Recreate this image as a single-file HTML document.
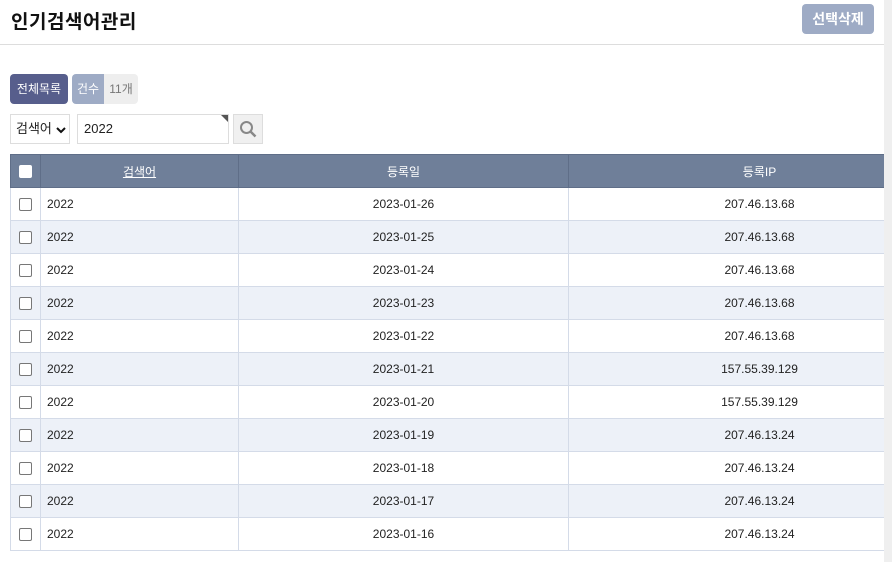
<!DOCTYPE html>
<html><head><meta charset="utf-8"><style>
*{box-sizing:border-box;margin:0;padding:0}
body{width:892px;height:562px;background:#fff;font-family:"Liberation Sans","Noto Sans CJK KR",sans-serif;position:relative;overflow:hidden;color:#222}
.sb{position:absolute;left:884px;top:0;width:8px;height:562px;background:#efefef;z-index:5}
h1{position:absolute;left:11px;top:7px;font-size:19px;font-weight:bold;color:#111;letter-spacing:0.5px}
.hr{position:absolute;left:0;top:44px;width:884px;height:1px;background:#ddd}
.del{position:absolute;left:802px;top:4px;width:72px;height:30px;background:#9eabc5;border-radius:4px;color:#fff;font-size:14px;font-weight:bold;text-align:center;line-height:30px}
.all{position:absolute;left:10px;top:74px;width:58px;height:30px;background:#575e8c;border-radius:4px;color:#fff;font-size:12px;text-align:center;line-height:30px}
.cnt{position:absolute;left:72px;top:74px;width:66px;height:30px;border-radius:4px;overflow:hidden;font-size:12px;line-height:30px;display:flex}
.cnt span:first-child{width:32px;background:#9eabc5;color:#fff;text-align:center}
.cnt span:last-child{flex:1;background:#eee;color:#777;text-align:center}
.sel{position:absolute;left:10px;top:114px;width:60px;height:30px;border:1px solid #ddd;font-size:13px;line-height:28px;padding-left:5px}
.inp{position:absolute;left:77px;top:114px;width:152px;height:30px;border:1px solid #ddd;font-size:13px;line-height:28px;padding-left:6px}
.inp:after{content:"";position:absolute;right:0;top:0;border-top:7px solid #555;border-left:7px solid transparent}
.btn{position:absolute;left:233px;top:114px;width:30px;height:30px;border:1px solid #ddd;background:#f0f0f0}
table{position:absolute;left:10px;top:154px;width:940px;border-collapse:collapse;font-size:12px;table-layout:fixed}
th{background:#6f7f99;color:#fff;font-weight:normal;height:33px;border:1px solid #5f6e88}
td{height:33px;border:1px solid #d4dbe8;text-align:center}
tr:nth-child(odd) td{background:#edf1f8}
td.k{text-align:left;padding-left:6px}
.cb{display:inline-block;width:13px;height:13px;border:1px solid #777;border-radius:2px;background:#fff;vertical-align:middle}
th .cb{border-color:#fff}
</style></head><body>
<div class="sb"></div>
<h1>인기검색어관리</h1>
<div class="del">선택삭제</div>
<div class="hr"></div>
<div class="all">전체목록</div>
<div class="cnt"><span>건수</span><span>11개</span></div>
<div class="sel">검색어 <svg width="10" height="8" viewBox="0 0 10 8" style="vertical-align:middle"><path d="M1 2l4 4 4-4" stroke="#111" stroke-width="2" fill="none"/></svg></div>
<div class="inp">2022</div>
<div class="btn"><svg width="28" height="28" viewBox="0 0 28 28"><circle cx="12.5" cy="12.5" r="5.5" stroke="#888" stroke-width="2" fill="none"/><path d="M16.5 16.5l5 5" stroke="#888" stroke-width="2.5"/></svg></div>
<table>
<colgroup><col style="width:30px"><col style="width:198px"><col style="width:330px"><col style="width:382px"></colgroup>
<tr><th><span class="cb"></span></th><th><u>검색어</u></th><th>등록일</th><th>등록IP</th></tr>
<tr><td><span class="cb"></span></td><td class="k">2022</td><td>2023-01-26</td><td>207.46.13.68</td></tr>
<tr><td><span class="cb"></span></td><td class="k">2022</td><td>2023-01-25</td><td>207.46.13.68</td></tr>
<tr><td><span class="cb"></span></td><td class="k">2022</td><td>2023-01-24</td><td>207.46.13.68</td></tr>
<tr><td><span class="cb"></span></td><td class="k">2022</td><td>2023-01-23</td><td>207.46.13.68</td></tr>
<tr><td><span class="cb"></span></td><td class="k">2022</td><td>2023-01-22</td><td>207.46.13.68</td></tr>
<tr><td><span class="cb"></span></td><td class="k">2022</td><td>2023-01-21</td><td>157.55.39.129</td></tr>
<tr><td><span class="cb"></span></td><td class="k">2022</td><td>2023-01-20</td><td>157.55.39.129</td></tr>
<tr><td><span class="cb"></span></td><td class="k">2022</td><td>2023-01-19</td><td>207.46.13.24</td></tr>
<tr><td><span class="cb"></span></td><td class="k">2022</td><td>2023-01-18</td><td>207.46.13.24</td></tr>
<tr><td><span class="cb"></span></td><td class="k">2022</td><td>2023-01-17</td><td>207.46.13.24</td></tr>
<tr><td><span class="cb"></span></td><td class="k">2022</td><td>2023-01-16</td><td>207.46.13.24</td></tr>
</table>
</body></html>
